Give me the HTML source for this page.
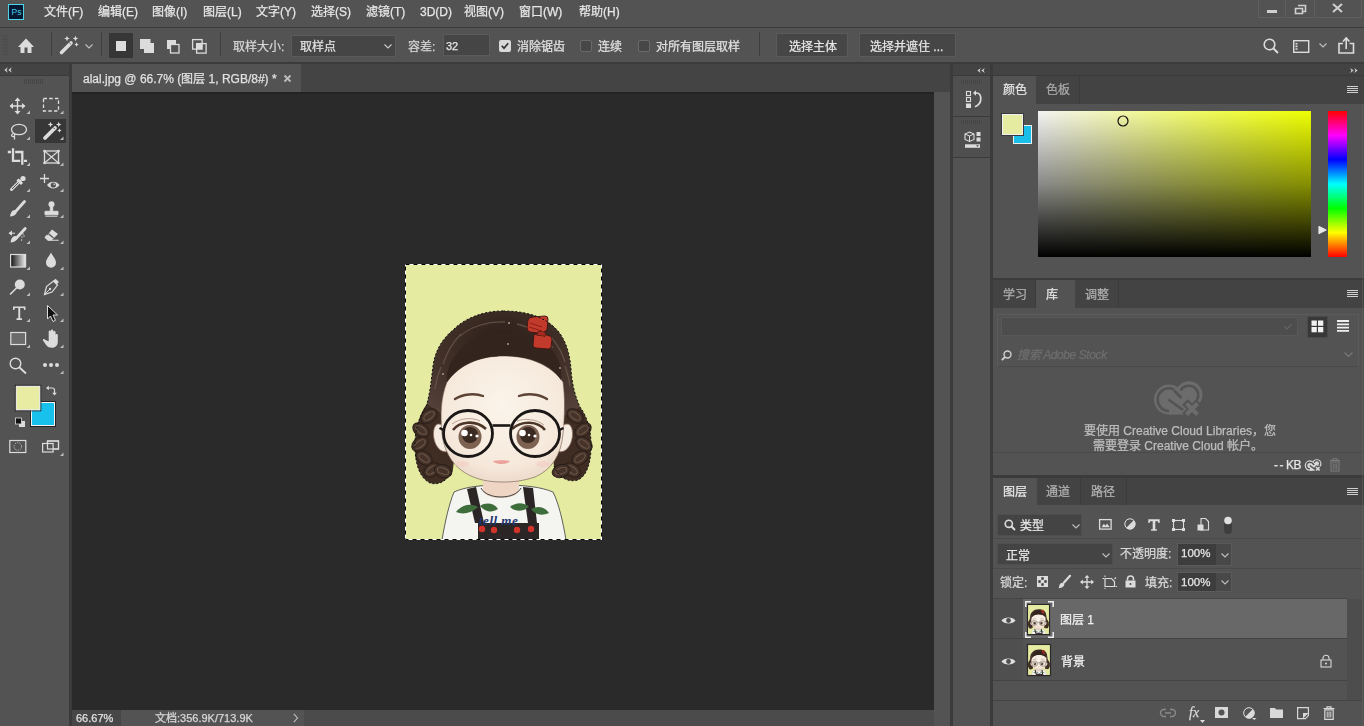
<!DOCTYPE html>
<html lang="zh-CN">
<head>
<meta charset="utf-8">
<style>
*{margin:0;padding:0;box-sizing:border-box}
html,body{width:1364px;height:726px;overflow:hidden;background:#535353;font-family:"Liberation Sans",sans-serif;color:#dcdcdc;font-size:12px}
.a{position:absolute}
.t{position:absolute;white-space:nowrap;line-height:1;will-change:transform;-webkit-text-stroke:0.25px currentColor}
svg{position:absolute;overflow:visible}
</style>
</head>
<body>
<!-- MENU BAR -->
<div class="a" style="left:0;top:0;width:1364px;height:27px;background:#535353"></div>
<div class="a" style="left:0;top:27px;width:1364px;height:1px;background:#3b3b3b"></div>
<svg style="left:8px;top:4px" width="16" height="16"><rect x="0.5" y="0.5" width="15" height="15" fill="#061a33" stroke="#4fd3e6" stroke-width="1"/><text x="3.5" y="11" font-family="Liberation Sans" font-size="8.5" fill="#48c8ea">Ps</text></svg>
<div class="t" style="left:44px;top:6px;font-size:12px;color:#e6e6e6">文件(F)</div>
<div class="t" style="left:98px;top:6px;font-size:12px;color:#e6e6e6">编辑(E)</div>
<div class="t" style="left:152px;top:6px;font-size:12px;color:#e6e6e6">图像(I)</div>
<div class="t" style="left:203px;top:6px;font-size:12px;color:#e6e6e6">图层(L)</div>
<div class="t" style="left:256px;top:6px;font-size:12px;color:#e6e6e6">文字(Y)</div>
<div class="t" style="left:311px;top:6px;font-size:12px;color:#e6e6e6">选择(S)</div>
<div class="t" style="left:366px;top:6px;font-size:12px;color:#e6e6e6">滤镜(T)</div>
<div class="t" style="left:420px;top:6px;font-size:12px;color:#e6e6e6">3D(D)</div>
<div class="t" style="left:464px;top:6px;font-size:12px;color:#e6e6e6">视图(V)</div>
<div class="t" style="left:519px;top:6px;font-size:12px;color:#e6e6e6">窗口(W)</div>
<div class="t" style="left:579px;top:6px;font-size:12px;color:#e6e6e6">帮助(H)</div>
<div class="a" style="left:1258px;top:0;width:104px;height:18px;border:1px solid #5f5f5f;border-top:none"></div>
<div class="a" style="left:1285px;top:0;width:1px;height:17px;background:#5f5f5f"></div>
<div class="a" style="left:1314px;top:0;width:1px;height:17px;background:#5f5f5f"></div>
<div class="a" style="left:1267px;top:10px;width:10px;height:3px;background:#cfcfcf"></div>
<svg style="left:1294px;top:4px" width="13" height="11"><path d="M4 1.5h7.5v6h-3M1.5 4.5h7v5h-7z" fill="none" stroke="#cfcfcf" stroke-width="1.6"/></svg>
<svg style="left:1332px;top:3px" width="11" height="10"><path d="M1 1L10 9M10 1L1 9" stroke="#cfcfcf" stroke-width="2"/></svg>


<!-- OPTIONS BAR -->
<div class="a" style="left:0;top:28px;width:1364px;height:35px;background:#535353"></div>
<div class="a" style="left:0;top:62px;width:1364px;height:2px;background:#3b3b3b"></div>
<svg style="left:2px;top:35px" width="6" height="21"><path d="M0 1h6M0 4h6M0 7h6M0 10h6M0 13h6M0 16h6M0 19h6" stroke="#4a4a4a" stroke-width="1"/></svg>
<svg style="left:17px;top:38px" width="18" height="16"><path d="M9 0.5L17 9H14.5V15H10.5V9.5H7.5V15H3.5V9H1Z" fill="#dcdcdc"/></svg>
<div class="a" style="left:51px;top:32px;width:1px;height:24px;background:#3e3e3e"></div>
<svg style="left:58px;top:35px" width="22" height="20"><path d="M3.5 17.5L13 8" stroke="#dcdcdc" stroke-width="3.6" stroke-linecap="round"/><path d="M9 0.7000000000000002L9.84 2.66L11.8 3.5L9.84 4.34L9 6.3L8.16 4.34L6.2 3.5L8.16 2.66z" fill="#dcdcdc"/><path d="M17.5 0.7000000000000002L18.34 2.66L20.3 3.5L18.34 4.34L17.5 6.3L16.66 4.34L14.7 3.5L16.66 2.66z" fill="#dcdcdc"/><path d="M18.5 7.3L19.16 8.84L20.7 9.5L19.16 10.16L18.5 11.7L17.84 10.16L16.3 9.5L17.84 8.84z" fill="#dcdcdc"/><path d="M11.2 7.5l1.6 1.6" stroke="#535353" stroke-width="0.9"/></svg>
<svg style="left:85px;top:44px" width="8" height="5"><path d="M0.5 0.5L4 4L7.5 0.5" fill="none" stroke="#bdbdbd" stroke-width="1.2"/></svg>
<div class="a" style="left:101px;top:32px;width:1px;height:24px;background:#3e3e3e"></div>
<div class="a" style="left:109px;top:33px;width:24px;height:25px;background:#363636;border-radius:1px"></div>
<div class="a" style="left:116px;top:41px;width:10px;height:10px;background:#dcdcdc"></div>
<svg style="left:140px;top:39px" width="15" height="15"><rect x="0" y="0" width="10.5" height="10" fill="#dcdcdc"/><rect x="4" y="4" width="10" height="10" fill="#dcdcdc"/></svg>
<svg style="left:167px;top:40px" width="13" height="14"><rect x="0" y="0" width="9" height="9" fill="#dcdcdc"/><rect x="3.5" y="4.5" width="8.5" height="8.5" fill="#535353" stroke="#dcdcdc" stroke-width="1.3"/></svg>
<svg style="left:192px;top:39px" width="15" height="15"><rect x="0.6" y="0.6" width="9.5" height="9.5" fill="none" stroke="#dcdcdc" stroke-width="1.3"/><rect x="4.6" y="4.6" width="9.5" height="9.5" fill="none" stroke="#dcdcdc" stroke-width="1.3"/><rect x="4.6" y="4.6" width="5.5" height="5.5" fill="#dcdcdc"/></svg>
<div class="a" style="left:220px;top:32px;width:1px;height:24px;background:#3e3e3e"></div>
<div class="t" style="left:233px;top:41px;color:#d6d6d6">取样大小:</div>
<div class="a" style="left:291px;top:35px;width:105px;height:22px;background:#454545;border:1px solid #5a5a5a"></div>
<div class="t" style="left:300px;top:41px;color:#e0e0e0">取样点</div>
<svg style="left:384px;top:44px" width="8" height="5"><path d="M0.5 0.5L4 4L7.5 0.5" fill="none" stroke="#c8c8c8" stroke-width="1.2"/></svg>
<div class="t" style="left:408px;top:41px;color:#d6d6d6">容差:</div>
<div class="a" style="left:443px;top:34px;width:47px;height:22px;background:#454545;border:1px solid #5a5a5a"></div>
<div class="t" style="left:446px;top:41px;font-size:11px;color:#e6e6e6">32</div>
<div class="a" style="left:499px;top:40px;width:12px;height:12px;background:#d8d8d8;border-radius:2px"></div>
<svg style="left:501px;top:42px" width="8" height="8"><path d="M0.8 3.8L3 6.3L7.2 1.2" fill="none" stroke="#2e2e2e" stroke-width="1.7"/></svg>
<div class="t" style="left:517px;top:41px;color:#e0e0e0">消除锯齿</div>
<div class="a" style="left:580px;top:40px;width:12px;height:12px;background:#474747;border:1px solid #6a6a6a;border-radius:2px"></div>
<div class="t" style="left:598px;top:41px;color:#e0e0e0">连续</div>
<div class="a" style="left:638px;top:40px;width:12px;height:12px;background:#474747;border:1px solid #6a6a6a;border-radius:2px"></div>
<div class="t" style="left:656px;top:41px;color:#e0e0e0">对所有图层取样</div>
<div class="a" style="left:759px;top:32px;width:1px;height:24px;background:#3e3e3e"></div>
<div class="a" style="left:776px;top:33px;width:72px;height:24px;background:#464646;border:1px solid #5a5a5a"></div>
<div class="t" style="left:789px;top:41px;color:#e6e6e6">选择主体</div>
<div class="a" style="left:859px;top:33px;width:97px;height:24px;background:#464646;border:1px solid #5a5a5a"></div>
<div class="t" style="left:870px;top:41px;color:#e6e6e6">选择并遮住 ...</div>
<svg style="left:1263px;top:38px" width="17" height="17"><circle cx="6.5" cy="6.5" r="5.3" fill="none" stroke="#dcdcdc" stroke-width="1.6"/><path d="M10.5 10.5L15 15" stroke="#dcdcdc" stroke-width="2"/></svg>
<svg style="left:1293px;top:40px" width="17" height="14"><rect x="0.7" y="0.7" width="15" height="11.6" fill="none" stroke="#dcdcdc" stroke-width="1.4"/><path d="M3.5 3v1.6M3.5 5.6v1.6M3.5 8.2v1.6" stroke="#dcdcdc" stroke-width="2"/></svg>
<svg style="left:1319px;top:43px" width="8" height="5"><path d="M0.5 0.5L4 4L7.5 0.5" fill="none" stroke="#bdbdbd" stroke-width="1.2"/></svg>
<svg style="left:1338px;top:37px" width="17" height="17"><path d="M5 6.5H1V16H15.5V6.5H11.5" fill="none" stroke="#dcdcdc" stroke-width="1.6"/><path d="M8.2 12V2" stroke="#dcdcdc" stroke-width="1.6"/><path d="M5 4.5L8.2 1L11.4 4.5" fill="none" stroke="#dcdcdc" stroke-width="1.6"/></svg>


<!-- LEFT TOOLS PANEL -->
<div class="a" style="left:0;top:64px;width:69px;height:12px;background:#434343"></div>
<div class="a" style="left:0;top:76px;width:69px;height:650px;background:#535353"></div>
<div class="a" style="left:69px;top:64px;width:3px;height:662px;background:#3b3b3b"></div>
<svg style="left:4px;top:67px" width="8" height="6"><path d="M3.8 0.3L0.3 3L3.8 5.7L2.6 3z M7.8 0.3L4.3 3L7.8 5.7L6.6 3z" fill="#d0d0d0"/></svg>
<svg style="left:24px;top:79px" width="20" height="5"><path d="M0.5 0v5M2.5 0v5M4.5 0v5M6.5 0v5M8.5 0v5M10.5 0v5M12.5 0v5M14.5 0v5M16.5 0v5M18.5 0v5" stroke="#464646" stroke-width="1"/></svg>
<div class="a" style="left:35px;top:119px;width:31px;height:24px;background:#373737"></div>
<svg style="left:0;top:0" width="70" height="460">
<!-- move -->
<path d="M17.5 99v14M10.5 106h14" stroke="#dcdcdc" stroke-width="1.4"/>
<path d="M17.5 97.5l-3 3.5h6z M17.5 114.5l-3-3.5h6z M9.5 106l3.5-3v6z M25.5 106l-3.5-3v6z" fill="#dcdcdc"/>
<path d="M30 114h-3.5l3.5-3.5z" fill="#bdbdbd"/>
<!-- marquee -->
<rect x="43.5" y="98.5" width="15" height="12.5" fill="none" stroke="#dcdcdc" stroke-width="1.3" stroke-dasharray="3.5 2.2"/>
<path d="M63.5 114h-3.5l3.5-3.5z" fill="#bdbdbd"/>
<!-- lasso -->
<ellipse cx="19" cy="129.5" rx="7.5" ry="5.2" fill="none" stroke="#dcdcdc" stroke-width="1.3"/>
<path d="M13 133.5c-2 1.5-2 3 1 3.2M14.5 134v5.5" fill="none" stroke="#dcdcdc" stroke-width="1.3"/>
<path d="M30 140h-3.5l3.5-3.5z" fill="#bdbdbd"/>
<!-- wand -->
<path d="M45 138L55 128" stroke="#dcdcdc" stroke-width="3.8" stroke-linecap="round"/>
<path d="M50.5 121.7L51.34 123.66L53.3 124.5L51.34 125.34L50.5 127.3L49.66 125.34L47.7 124.5L49.66 123.66z" fill="#dcdcdc"/><path d="M58.7 121.7L59.540000000000006 123.66L61.5 124.5L59.540000000000006 125.34L58.7 127.3L57.86 125.34L55.900000000000006 124.5L57.86 123.66z" fill="#dcdcdc"/><path d="M59.4 128.3L60.059999999999995 129.84L61.6 130.5L60.059999999999995 131.16L59.4 132.7L58.74 131.16L57.199999999999996 130.5L58.74 129.84z" fill="#dcdcdc"/><path d="M53.2 127.5l1.5 1.5" stroke="#373737" stroke-width="0.9"/>
<path d="M63.5 140h-3.5l3.5-3.5z" fill="#bdbdbd"/>
<!-- crop -->
<path d="M7.8 152h3.2M13 148.2V160.8H20.2M15.2 152H22.3V164.8M24 160.8h3" fill="none" stroke="#dcdcdc" stroke-width="2.3"/>
<path d="M30 166h-3.5l3.5-3.5z" fill="#bdbdbd"/>
<!-- frame -->
<rect x="44.5" y="151" width="14" height="12" fill="none" stroke="#dcdcdc" stroke-width="1.3"/>
<path d="M44.5 151L58.5 163M58.5 151L44.5 163" stroke="#dcdcdc" stroke-width="1.1"/>
<circle cx="44.5" cy="151" r="1.3" fill="#dcdcdc"/><circle cx="58.5" cy="151" r="1.3" fill="#dcdcdc"/><circle cx="44.5" cy="163" r="1.3" fill="#dcdcdc"/><circle cx="58.5" cy="163" r="1.3" fill="#dcdcdc"/>
<path d="M63.5 166h-3.5l3.5-3.5z" fill="#bdbdbd"/>
<!-- eyedropper -->
<path d="M11.5 189.5L20 181" stroke="#dcdcdc" stroke-width="3" stroke-linecap="round"/>
<path d="M12 189l7.5-7.5" stroke="#535353" stroke-width="1"/>
<path d="M17.5 179.5l4.5 4.5" stroke="#dcdcdc" stroke-width="3"/>
<circle cx="23" cy="178.5" r="2.6" fill="#dcdcdc"/>
<path d="M30 192h-3.5l3.5-3.5z" fill="#bdbdbd"/>
<!-- +eye -->
<path d="M44.5 174v9M40 178.5h9" stroke="#dcdcdc" stroke-width="1.3"/>
<path d="M47 185c3-4.5 9.5-4.5 12.5 0c-3 4.5-9.5 4.5-12.5 0z" fill="#dcdcdc"/>
<circle cx="53.3" cy="185" r="2.6" fill="#535353"/><circle cx="54.2" cy="184.2" r="0.8" fill="#dcdcdc"/>
<path d="M63.5 192h-3.5l3.5-3.5z" fill="#bdbdbd"/>
<!-- brush -->
<path d="M16.5 210.5L24.5 201.5" stroke="#dcdcdc" stroke-width="2.8" stroke-linecap="round"/>
<path d="M10 216.5c0.5-3 1.5-6 4.5-6.5c2 0 3 1.5 2 3.2c-1.5 2.3-4 3-6.5 3.3z" fill="#dcdcdc"/>
<path d="M30 218h-3.5l3.5-3.5z" fill="#bdbdbd"/>
<!-- stamp -->
<circle cx="51.5" cy="204.2" r="3" fill="#dcdcdc"/>
<path d="M50.3 206v5.5h2.4V206z M45 211.3h13v3.5H45z M45.5 216.3h12" fill="#dcdcdc" stroke="#dcdcdc" stroke-width="0.9"/>
<path d="M63.5 218h-3.5l3.5-3.5z" fill="#bdbdbd"/>
<!-- history brush -->
<path d="M16 238.5L25.2 228.5" stroke="#dcdcdc" stroke-width="2.8" stroke-linecap="round"/>
<path d="M10.5 242.5c0.5-3 1.5-6 4.5-6.5c2 0 3 1.5 2 3.2c-1.5 2.3-4 3-6.5 3.3z" fill="#dcdcdc"/>
<path d="M9 233.2h6" stroke="#dcdcdc" stroke-width="1"/><path d="M8.5 233.2l3.5-2.6v5.2z" fill="#dcdcdc"/>
<circle cx="23" cy="234" r="0.7" fill="#dcdcdc"/><circle cx="22" cy="237" r="0.7" fill="#dcdcdc"/><circle cx="24" cy="236" r="0.7" fill="#dcdcdc"/><circle cx="21.5" cy="240" r="0.7" fill="#dcdcdc"/>
<path d="M30 244h-3.5l3.5-3.5z" fill="#bdbdbd"/>
<!-- eraser -->
<path d="M52 229.5l6 4.5l-6.5 6.5h-3.5l-3-2.5z" fill="#dcdcdc"/>
<path d="M48.5 233.8l5 4.2" stroke="#535353" stroke-width="1.3"/>
<path d="M47 235l-1.8 2.2 3 3h10.5" fill="none" stroke="#dcdcdc" stroke-width="1.1"/>
<path d="M63.5 244h-3.5l3.5-3.5z" fill="#bdbdbd"/>
<!-- gradient -->
<defs><linearGradient id="gg" x1="0" x2="1"><stop offset="0" stop-color="#111"/><stop offset="1" stop-color="#eee"/></linearGradient></defs>
<rect x="10.6" y="254.5" width="15" height="12.5" fill="url(#gg)" stroke="#dcdcdc" stroke-width="1.2"/>
<path d="M30 270h-3.5l3.5-3.5z" fill="#bdbdbd"/>
<!-- drop -->
<path d="M51 252.5c-1.5 3.5-5 6.5-5 10.2a5 5 0 0 0 10 0c0-3.7-3.5-6.7-5-10.2z" fill="#dcdcdc"/>
<path d="M63.5 270h-3.5l3.5-3.5z" fill="#bdbdbd"/>
<!-- dodge -->
<circle cx="19.8" cy="284.5" r="5" fill="#dcdcdc"/>
<path d="M16.5 288L10.5 294" stroke="#dcdcdc" stroke-width="1.6" stroke-linecap="round"/>
<path d="M30 296h-3.5l3.5-3.5z" fill="#bdbdbd"/>
<!-- pen -->
<path d="M44.5 294.5l2-8l7-5.5l4 4l-5.5 7z" fill="none" stroke="#dcdcdc" stroke-width="1.2"/>
<path d="M53.2 281l2.3-2.3l3.4 3.4l-2.3 2.3z" fill="#dcdcdc"/>
<path d="M44.8 294.2l4.8-4.8" stroke="#dcdcdc" stroke-width="1"/><circle cx="50" cy="289" r="1.2" fill="#dcdcdc"/>
<path d="M63.5 296h-3.5l3.5-3.5z" fill="#bdbdbd"/>
<!-- type -->
<path d="M13 306.5h12.5v3.5h-1.2l-0.8-2h-3.3v10.3h1.8v1.6h-5.5v-1.6h1.8v-10.3h-3.3l-0.8 2H13z" fill="#dcdcdc"/>
<path d="M30 322h-3.5l3.5-3.5z" fill="#bdbdbd"/>
<!-- path select arrow -->
<path d="M47.5 305.5v13.5l3-3l2.5 5.5l2.5-1.2l-2.5-5.3h4.5z" fill="#111" stroke="#dcdcdc" stroke-width="1"/>
<path d="M63.5 322h-3.5l3.5-3.5z" fill="#bdbdbd"/>
<!-- rectangle -->
<rect x="10.8" y="332.5" width="14.8" height="12" fill="#6b6b6b" stroke="#dcdcdc" stroke-width="1.2"/>
<path d="M30 348h-3.5l3.5-3.5z" fill="#bdbdbd"/>
<!-- hand -->
<path d="M45.5 340c-1.5-1.5-3-1-2.5 0.5l3.5 5c1.3 1.8 3 2.2 5.5 2.2c3.5 0 5.8-2.5 5.8-6v-6.5c0-1.5-2.2-1.5-2.2 0v4v-7c0-1.6-2.3-1.6-2.3 0v6.5v-8c0-1.6-2.3-1.6-2.3 0v8v-7c0-1.6-2.3-1.6-2.3 0v9.5z" fill="#dcdcdc"/>
<path d="M63.5 348h-3.5l3.5-3.5z" fill="#bdbdbd"/>
<!-- zoom -->
<circle cx="15.5" cy="363.5" r="5.3" fill="none" stroke="#dcdcdc" stroke-width="1.4"/>
<path d="M19.5 367.5L25.5 373" stroke="#dcdcdc" stroke-width="1.8" stroke-linecap="round"/>
<!-- more -->
<circle cx="45" cy="365" r="2" fill="#dcdcdc"/><circle cx="51" cy="365" r="2" fill="#dcdcdc"/><circle cx="57" cy="365" r="2" fill="#dcdcdc"/>
<path d="M63.5 374h-3.5l3.5-3.5z" fill="#bdbdbd"/>
<!-- swatches -->
<rect x="30.5" y="401.5" width="25" height="25" fill="none" stroke="#222" stroke-width="1"/><rect x="31.5" y="402.5" width="23" height="23" fill="#18c0ec" stroke="#f4f4f4" stroke-width="1"/>
<rect x="15.3" y="385.3" width="25.5" height="25.5" fill="none" stroke="#222" stroke-width="1"/><rect x="16.3" y="386.3" width="23.5" height="23.5" fill="#e7eca2" stroke="#f4f4f4" stroke-width="1"/>
<path d="M48 388h4.5a2 2 0 0 1 2 2v3.5" fill="none" stroke="#dcdcdc" stroke-width="1.2"/>
<path d="M46 388l2.8-2.3v4.6z M54.5 395.5l-2.3-2.8h4.6z" fill="#dcdcdc"/>
<rect x="19" y="421" width="6" height="6" fill="#dcdcdc"/>
<rect x="15.5" y="418" width="6" height="6" fill="#111" stroke="#dcdcdc" stroke-width="0.8"/>
<!-- quick mask -->
<rect x="9.8" y="440.5" width="16" height="12" fill="none" stroke="#dcdcdc" stroke-width="1.2"/>
<circle cx="17.8" cy="446.5" r="3.8" fill="none" stroke="#dcdcdc" stroke-width="1" stroke-dasharray="1 1.4"/>
<!-- screen mode -->
<rect x="47.5" y="441" width="11" height="8" fill="#535353" stroke="#dcdcdc" stroke-width="1.2"/>
<rect x="42.6" y="443.5" width="10.5" height="8.5" fill="#535353" stroke="#dcdcdc" stroke-width="1.2"/>
<rect x="47.5" y="441" width="11" height="8" fill="none" stroke="#dcdcdc" stroke-width="1.2"/>
<path d="M63.5 456h-3.5l3.5-3.5z" fill="#bdbdbd"/>
</svg>


<!-- DOC AREA -->
<div class="a" style="left:72px;top:64px;width:878px;height:28px;background:#444444"></div>
<div class="a" style="left:72px;top:64px;width:229px;height:28px;background:#535353"></div>
<div class="a" style="left:72px;top:92px;width:862px;height:618px;background:#2a2a2a;border-top:2px solid #232323"></div>
<div class="a" style="left:934px;top:92px;width:16px;height:618px;background:#535353"></div>
<div class="a" style="left:72px;top:710px;width:878px;height:16px;background:#535353"></div>
<div class="a" style="left:950px;top:64px;width:3px;height:662px;background:#3b3b3b"></div>
<div class="t" style="left:83px;top:73px;font-size:12px;color:#e0e0e0">alal.jpg @ 66.7% (图层 1, RGB/8#) *</div>
<svg style="left:284px;top:75px" width="7" height="7"><path d="M0.5 0.5L6.5 6.5M6.5 0.5L0.5 6.5" stroke="#bdbdbd" stroke-width="1.8"/></svg>
<!-- canvas image -->
<svg style="left:405px;top:264px" width="197" height="276" viewBox="0 0 197 276">
<defs>
<radialGradient id="hairg" cx="0.5" cy="0.3" r="0.7"><stop offset="0" stop-color="#2a1e18"/><stop offset="0.55" stop-color="#3f2f27"/><stop offset="1" stop-color="#54413a"/></radialGradient>
<radialGradient id="faceg" cx="0.5" cy="0.4" r="0.6"><stop offset="0" stop-color="#fbf4ea"/><stop offset="0.8" stop-color="#f6e9dc"/><stop offset="1" stop-color="#eedccd"/></radialGradient>
</defs>
<g id="girl"><rect width="197" height="276" fill="#e6eba2"/>
<!-- shirt -->
<path d="M49 228C60 223 75 221 97 221C120 221 136 223 148 228C154 240 158 258 161 276H37C40 258 44 240 49 228z" fill="#f4f4f1" stroke="#3a3a3a" stroke-width="0.8"/>
<path d="M78 212h36v16c-6 8-30 8-36 0z" fill="#efd5c4"/>
<path d="M76 224c6 12 34 12 40 0" fill="none" stroke="#3a3a3a" stroke-width="1"/>
<!-- straps & bib -->
<path d="M62 225l9-2l8 36h-9z" fill="#2b2525"/>
<path d="M118 223l10 1l4 35h-9z" fill="#2b2525"/>
<path d="M73 259h61v17H73z" fill="#2b2525"/>
<circle cx="77" cy="265" r="3.2" fill="#d2342c"/><circle cx="89" cy="266" r="3.2" fill="#d2342c"/><circle cx="112" cy="266" r="3.2" fill="#d2342c"/><circle cx="126" cy="265" r="3.2" fill="#d2342c"/>
<!-- leaves -->
<path d="M51 248c6-8 16-9 22-5c-6 6-15 8-22 5z" fill="#3e6d3c"/>
<path d="M75 242c6-4 14-3 18 3c-6 4-13 3-18-3z" fill="#3e6d3c"/>
<path d="M105 243c6-5 14-5 19 0c-6 5-14 5-19 0z" fill="#3e6d3c"/>
<path d="M126 245c7-4 14-2 18 4c-7 3-14 2-18-4z" fill="#3e6d3c"/>
<text x="74" y="261" font-family="Liberation Serif" font-style="italic" font-size="13" fill="#1f3572" font-weight="bold" letter-spacing="0.5">tell me</text>
<!-- hair back + braids -->
<path d="M98 47C120 47 140 52 153 67C162 78 165 92 166 105C167 120 170 132 175 143L152 165L45 165L21 143C25 130 26 118 28 102C30 88 36 76 48 66C60 54 78 47 98 47z" fill="url(#hairg)"/>
<path d="M22 140C14 150 9 168 10 186C11 202 15 214 25 219C34 222 44 216 48 205C50 192 49 172 45 155z" fill="#3f2d24"/>
<path d="M175 143C182 152 187 168 186 186C185 202 181 212 173 216C163 219 153 213 149 202C147 190 148 170 152 156z" fill="#3f2d24"/>
<ellipse cx="24" cy="152" rx="9" ry="6.3" transform="rotate(-35 24 152)" fill="#45332a" stroke="#2a1d17" stroke-width="1"/>
<ellipse cx="24" cy="152" rx="6" ry="3" transform="rotate(-35 24 152)" fill="none" stroke="#6d5647" stroke-width="1.1"/>
<ellipse cx="16" cy="166" rx="9" ry="6.3" transform="rotate(35 16 166)" fill="#45332a" stroke="#2a1d17" stroke-width="1"/>
<ellipse cx="16" cy="166" rx="6" ry="3" transform="rotate(35 16 166)" fill="none" stroke="#6d5647" stroke-width="1.1"/>
<ellipse cx="15" cy="180" rx="9" ry="6.3" transform="rotate(-35 15 180)" fill="#45332a" stroke="#2a1d17" stroke-width="1"/>
<ellipse cx="15" cy="180" rx="6" ry="3" transform="rotate(-35 15 180)" fill="none" stroke="#6d5647" stroke-width="1.1"/>
<ellipse cx="19" cy="194" rx="9" ry="6.3" transform="rotate(35 19 194)" fill="#45332a" stroke="#2a1d17" stroke-width="1"/>
<ellipse cx="19" cy="194" rx="6" ry="3" transform="rotate(35 19 194)" fill="none" stroke="#6d5647" stroke-width="1.1"/>
<ellipse cx="27" cy="206" rx="9" ry="6.3" transform="rotate(-35 27 206)" fill="#45332a" stroke="#2a1d17" stroke-width="1"/>
<ellipse cx="27" cy="206" rx="6" ry="3" transform="rotate(-35 27 206)" fill="none" stroke="#6d5647" stroke-width="1.1"/>
<ellipse cx="38" cy="207" rx="9" ry="6.3" transform="rotate(20 38 207)" fill="#45332a" stroke="#2a1d17" stroke-width="1"/>
<ellipse cx="38" cy="207" rx="6" ry="3" transform="rotate(20 38 207)" fill="none" stroke="#6d5647" stroke-width="1.1"/>
<ellipse cx="170" cy="152" rx="9" ry="6.3" transform="rotate(35 170 152)" fill="#45332a" stroke="#2a1d17" stroke-width="1"/>
<ellipse cx="170" cy="152" rx="6" ry="3" transform="rotate(35 170 152)" fill="none" stroke="#6d5647" stroke-width="1.1"/>
<ellipse cx="178" cy="166" rx="9" ry="6.3" transform="rotate(-35 178 166)" fill="#45332a" stroke="#2a1d17" stroke-width="1"/>
<ellipse cx="178" cy="166" rx="6" ry="3" transform="rotate(-35 178 166)" fill="none" stroke="#6d5647" stroke-width="1.1"/>
<ellipse cx="179" cy="180" rx="9" ry="6.3" transform="rotate(35 179 180)" fill="#45332a" stroke="#2a1d17" stroke-width="1"/>
<ellipse cx="179" cy="180" rx="6" ry="3" transform="rotate(35 179 180)" fill="none" stroke="#6d5647" stroke-width="1.1"/>
<ellipse cx="175" cy="194" rx="9" ry="6.3" transform="rotate(-35 175 194)" fill="#45332a" stroke="#2a1d17" stroke-width="1"/>
<ellipse cx="175" cy="194" rx="6" ry="3" transform="rotate(-35 175 194)" fill="none" stroke="#6d5647" stroke-width="1.1"/>
<ellipse cx="167" cy="206" rx="9" ry="6.3" transform="rotate(35 167 206)" fill="#45332a" stroke="#2a1d17" stroke-width="1"/>
<ellipse cx="167" cy="206" rx="6" ry="3" transform="rotate(35 167 206)" fill="none" stroke="#6d5647" stroke-width="1.1"/>
<ellipse cx="156" cy="207" rx="9" ry="6.3" transform="rotate(-20 156 207)" fill="#45332a" stroke="#2a1d17" stroke-width="1"/>
<ellipse cx="156" cy="207" rx="6" ry="3" transform="rotate(-20 156 207)" fill="none" stroke="#6d5647" stroke-width="1.1"/>
<!-- face -->
<path d="M33 160c-7 2-6 22 4 27c5 2 9 0 10-4l-2-22z" fill="#f6ebe0" stroke="#8a7060" stroke-width="0.8"/>
<path d="M163 160c7 2 6 22-4 27c-5 2-9 0-10-4l2-22z" fill="#f6ebe0" stroke="#8a7060" stroke-width="0.8"/>
<path d="M42 118C55 100 75 92 99 92C123 92 145 100 158 118C160 132 160 150 158 170C156 192 146 206 130 213C118 217 108 218 98 218C88 218 77 217 66 212C51 205 40 192 37 170C35 150 36 133 42 118z" fill="url(#faceg)" stroke="#6b5548" stroke-width="0.6"/>
<!-- hair front fringe -->
<path d="M42 118C40 105 50 85 70 75C90 66 115 66 135 76C150 84 158 100 156 116C146 100 125 92 99 92C75 92 55 100 42 118z" fill="#33251e"/>
<path d="M55 72c10-9 28-15 45-14M112 60c14 3 28 12 36 24M38 100c4-12 10-22 18-30M160 98c-3-10-8-18-14-25M30 125c1-8 3-15 6-22M165 122c-1-8-3-14-5-20" fill="none" stroke="#6a564a" stroke-width="1.3" opacity="0.8"/>
<circle cx="104" cy="59" r="1" fill="#b8a090"/><circle cx="103" cy="80" r="0.9" fill="#b8a090"/><circle cx="155" cy="104" r="0.9" fill="#b8a090"/><circle cx="38" cy="110" r="0.9" fill="#b8a090"/>
<!-- bow -->
<path d="M123 56Q124 53 128 53L140 52Q143 52 143 55L142 66L137 69.5L125 68Q122 67 122 64z" fill="#c23a2b" stroke="#3a1510" stroke-width="0.9"/>
<path d="M129 70.5L137 69.5L145 72Q147 73 147 76L146 83Q146 85 143 85L131 84Q128 84 128 81z" fill="#c23a2b" stroke="#3a1510" stroke-width="0.9"/>
<path d="M125 59l12 4M124 63l13 4" stroke="#8a2018" stroke-width="1" fill="none"/>
<path d="M133 67.5q4-1 8 1.5l-1 3.5q-4-1.5-8-1z" fill="#a82a1e" stroke="#4a1a12" stroke-width="0.7"/>
<!-- eyebrows -->
<path d="M50 135c8-5 20-6 28-3" fill="none" stroke="#5d4334" stroke-width="2.4" stroke-linecap="round"/>
<path d="M114 132c8-3 20-2 28 3" fill="none" stroke="#5d4334" stroke-width="2.4" stroke-linecap="round"/>
<!-- eyes -->
<ellipse cx="65" cy="173" rx="11.5" ry="12" fill="#7d6252"/><ellipse cx="65" cy="171" rx="8" ry="8" fill="#3a2a22"/>
<ellipse cx="123" cy="173" rx="11.5" ry="12" fill="#7d6252"/><ellipse cx="123" cy="171" rx="8" ry="8" fill="#3a2a22"/>
<circle cx="59.5" cy="169" r="3.3" fill="#fff"/><circle cx="66" cy="171" r="1.3" fill="#fff"/><circle cx="72" cy="172" r="1.6" fill="#fff"/>
<circle cx="117.5" cy="169" r="3.3" fill="#fff"/><circle cx="124" cy="171" r="1.3" fill="#fff"/><circle cx="130" cy="172" r="1.6" fill="#fff"/>
<path d="M48 166c6-8 22-11 33-1M107 165c10-9 26-8 33 1" fill="none" stroke="#4d3528" stroke-width="2.6"/>
<path d="M47 160c8-6 20-7 28-3M112 157c8-3 19-2 27 4" fill="none" stroke="#b9a090" stroke-width="1"/>
<!-- glasses -->
<ellipse cx="63" cy="169.5" rx="24.5" ry="23" fill="none" stroke="#1a1716" stroke-width="2.8"/>
<ellipse cx="130" cy="169.5" rx="24.5" ry="23" fill="none" stroke="#1a1716" stroke-width="2.8"/>
<path d="M87.5 161.5h18" stroke="#1a1716" stroke-width="2.6"/>
<path d="M38.5 166l-4 -2M154.5 166l4-2" stroke="#1a1716" stroke-width="2.4"/>
<!-- mouth & cheeks -->
<path d="M88 197c5-1 12-1 17 0c-2 4-15 4-17 0z" fill="#eaa29a"/>
<ellipse cx="57" cy="200" rx="7" ry="3" fill="#f3d0c4" opacity="0.7"/><ellipse cx="138" cy="200" rx="7" ry="3" fill="#f3d0c4" opacity="0.7"/>
</g>
<!-- marching ants -->
<path d="M98 47C78 47 60 54 48 66C36 76 30 88 28 102C26 118 25 130 21 143C14 152 9 168 10 186C11 202 15 214 25 219C34 222 44 216 48 205M149 202C153 213 163 219 173 216C181 212 185 202 186 186C187 168 182 152 175 143C170 132 167 120 166 105C165 92 162 78 153 67C140 52 120 47 98 47" fill="none" stroke="#111" stroke-width="1" stroke-dasharray="2 2"/>
<rect x="0.5" y="0.5" width="196" height="275" fill="none" stroke="#fff" stroke-width="1"/>
<rect x="0.5" y="0.5" width="196" height="275" fill="none" stroke="#000" stroke-width="1" stroke-dasharray="4 4"/>
</svg>
<!-- status bar -->
<div class="a" style="left:304px;top:710px;width:630px;height:16px;background:#4b4b4b"></div>
<div class="a" style="left:72px;top:710px;width:49px;height:16px;background:#474747"></div>
<div class="t" style="left:76px;top:713px;font-size:11px;color:#e0e0e0">66.67%</div>
<div class="t" style="left:155px;top:713px;font-size:11px;color:#d8d8d8">文档:356.9K/713.9K</div>
<svg style="left:293px;top:713px" width="6" height="10"><path d="M0.8 0.8L4.5 5L0.8 9.2" fill="none" stroke="#c0c0c0" stroke-width="1.1"/></svg>


<!-- ICON STRIP -->
<div class="a" style="left:953px;top:64px;width:37px;height:12px;background:#434343"></div>
<div class="a" style="left:953px;top:76px;width:37px;height:650px;background:#535353"></div>
<div class="a" style="left:990px;top:64px;width:3px;height:662px;background:#3b3b3b"></div>
<svg style="left:977px;top:68px" width="8" height="5"><path d="M3.8 0L0.3 2.5L3.8 5L2.6 2.5z M7.8 0L4.3 2.5L7.8 5L6.6 2.5z" fill="#d0d0d0"/></svg>
<div class="a" style="left:953px;top:76px;width:37px;height:41px;border-bottom:1px solid #3a3a3a;background:#4f4f4f"></div>
<div class="a" style="left:953px;top:117px;width:37px;height:41px;border-bottom:1px solid #3a3a3a;background:#4f4f4f"></div>
<svg style="left:961px;top:80px" width="22" height="5"><path d="M0.5 0v4M2.5 0v4M4.5 0v4M6.5 0v4M8.5 0v4M10.5 0v4M12.5 0v4M14.5 0v4M16.5 0v4M18.5 0v4M20.5 0v4" stroke="#464646" stroke-width="1"/></svg>
<svg style="left:961px;top:120px" width="22" height="5"><path d="M0.5 0v4M2.5 0v4M4.5 0v4M6.5 0v4M8.5 0v4M10.5 0v4M12.5 0v4M14.5 0v4M16.5 0v4M18.5 0v4M20.5 0v4" stroke="#464646" stroke-width="1"/></svg>
<svg style="left:965px;top:90px" width="17" height="19"><rect x="1.5" y="1.5" width="4" height="4" fill="none" stroke="#dcdcdc" stroke-width="1.1"/><rect x="1.5" y="7.5" width="4" height="4" fill="none" stroke="#dcdcdc" stroke-width="1.1"/><rect x="1" y="13.5" width="5" height="4.5" fill="#dcdcdc"/><path d="M9 3h2.5c2.8 0 4.3 2.6 4.3 5.8c0 3.6-2.2 6.5-5.8 8" fill="none" stroke="#dcdcdc" stroke-width="1.7"/><path d="M8 3l3-2.8v5.6z" fill="#dcdcdc"/></svg>
<svg style="left:964px;top:131px" width="18" height="18"><path d="M5.5 1L10 3v5.5L5.5 10.5L1 8.5V3z" fill="none" stroke="#dcdcdc" stroke-width="1.1"/><path d="M1 3l4.5 2l4.5-2M5.5 5v5.5" fill="none" stroke="#dcdcdc" stroke-width="1"/><rect x="12.5" y="1" width="4" height="4" fill="#dcdcdc"/><rect x="12.5" y="6.5" width="4" height="4" fill="#dcdcdc"/><rect x="1" y="13.3" width="15" height="3.5" fill="#dcdcdc"/><path d="M12 14.2h3l-1.5 1.8z" fill="#535353"/></svg>


<!-- RIGHT PANELS -->
<div class="a" style="left:993px;top:64px;width:371px;height:12px;background:#434343"></div>

<svg style="left:1350px;top:68px" width="8" height="5"><path d="M0.2 0L3.7 2.5L0.2 5L1.4 2.5z M4.2 0L7.7 2.5L4.2 5L5.4 2.5z" fill="#d0d0d0"/></svg>
<!-- COLOR PANEL -->
<div class="a" style="left:993px;top:76px;width:371px;height:28px;background:#434343"></div>
<div class="a" style="left:993px;top:76px;width:43px;height:28px;background:#535353"></div>
<div class="a" style="left:1036px;top:76px;width:44px;height:28px;border-right:1px solid #3c3c3c"></div>
<div class="t" style="left:1003px;top:84px;font-size:12px;color:#e6e6e6">颜色</div>
<div class="t" style="left:1046px;top:84px;font-size:12px;color:#a8a8a8">色板</div>
<svg style="left:1347px;top:86px" width="11" height="8"><path d="M0 0.5h11M0 2.5h11M0 4.5h11M0 6.5h11" stroke="#d0d0d0" stroke-width="1"/></svg>
<div class="a" style="left:993px;top:104px;width:369px;height:174px;background:#535353"></div>
<div class="a" style="left:1038px;top:111px;width:273px;height:146px;background:linear-gradient(to bottom,rgba(0,0,0,0) 0%,rgba(0,0,0,0.44) 50%,#000 100%),linear-gradient(to right,#f4f4f4,#eeff00)"></div>
<svg style="left:1117px;top:115px" width="12" height="12"><circle cx="6" cy="6" r="5" fill="none" stroke="#111" stroke-width="1.2"/></svg>
<div class="a" style="left:1328px;top:111px;width:19px;height:146px;background:linear-gradient(to bottom,#ff0000 0%,#ff00ff 16.7%,#0000ff 33.3%,#00ffff 50%,#00ff00 66.7%,#ffff00 83.3%,#ff0000 100%)"></div>
<svg style="left:1318px;top:225px" width="9" height="10"><path d="M1 1.5L8 5L1 8.5z" fill="#e8e8e8" stroke="#e8e8e8" stroke-width="1.2" stroke-linejoin="round"/></svg>
<div class="a" style="left:1013px;top:125px;width:19px;height:19px;background:#19bfe9;border:1px solid #f0f0f0"></div>
<div class="a" style="left:1002px;top:114px;width:21px;height:21px;background:#e6eba2;border:1px solid #f0f0f0;outline:1px solid #3a3a3a"></div>
<div class="a" style="left:993px;top:278px;width:371px;height:2px;background:#3b3b3b"></div>
<!-- LIBRARY PANEL -->
<div class="a" style="left:993px;top:280px;width:371px;height:28px;background:#434343"></div>
<div class="a" style="left:993px;top:280px;width:43px;height:28px;border-right:1px solid #3c3c3c"></div>
<div class="a" style="left:1036px;top:280px;width:39px;height:28px;background:#535353"></div>
<div class="a" style="left:1075px;top:280px;width:44px;height:28px;border-right:1px solid #3c3c3c"></div>
<div class="t" style="left:1003px;top:289px;font-size:12px;color:#b0b0b0">学习</div>
<div class="t" style="left:1046px;top:289px;font-size:12px;color:#e6e6e6">库</div>
<div class="t" style="left:1085px;top:289px;font-size:12px;color:#b0b0b0">调整</div>
<svg style="left:1347px;top:290px" width="11" height="8"><path d="M0 0.5h11M0 2.5h11M0 4.5h11M0 6.5h11" stroke="#d0d0d0" stroke-width="1"/></svg>
<div class="a" style="left:993px;top:308px;width:369px;height:144px;background:#535353"></div>
<div class="a" style="left:1001px;top:317px;width:297px;height:19px;background:#4d4d4d;border:1px solid #585858"></div>
<svg style="left:1284px;top:324px" width="8" height="6"><path d="M0.5 2.5L3 5L7.5 0.5" fill="none" stroke="#666" stroke-width="1.2"/></svg>
<div class="a" style="left:1307px;top:316px;width:21px;height:22px;background:#383838;border:1px solid #4a4a4a"></div>
<svg style="left:1311px;top:320px" width="13" height="13"><rect x="0.5" y="0.5" width="5.3" height="5.3" fill="#f0f0f0"/><rect x="7" y="0.5" width="5.3" height="5.3" fill="#f0f0f0"/><rect x="0.5" y="7" width="5.3" height="5.3" fill="#f0f0f0"/><rect x="7" y="7" width="5.3" height="5.3" fill="#f0f0f0"/></svg>
<svg style="left:1337px;top:320px" width="12" height="12"><path d="M0 1h12M0 4.3h12M0 7.6h12M0 10.9h12" stroke="#f0f0f0" stroke-width="1.8"/></svg>
<svg style="left:1001px;top:350px" width="11" height="11"><circle cx="6.5" cy="4.5" r="3.5" fill="none" stroke="#d0d0d0" stroke-width="1.4"/><path d="M4 7L0.8 10.2" stroke="#d0d0d0" stroke-width="1.8"/></svg>
<div class="t" style="left:1017px;top:349px;font-size:12px;color:#6e6e6e;font-style:italic;letter-spacing:-0.4px">搜索 Adobe Stock</div>
<svg style="left:1344px;top:352px" width="9" height="6"><path d="M0.5 0.5L4.5 4.5L8.5 0.5" fill="none" stroke="#7a7a7a" stroke-width="1.1"/></svg>
<div class="a" style="left:997px;top:314px;width:362px;height:53px;border:1px solid #5b5b5b;border-bottom-color:#4a4a4a"></div>
<svg style="left:1152px;top:378px" width="52" height="40"><g fill="#6c6c6c"><circle cx="17" cy="21.6" r="15"/><circle cx="37" cy="16.8" r="13.5"/><rect x="17" y="20" width="22" height="16.6"/></g><g fill="none" stroke="#535353" stroke-width="2.6"><path d="M17 33a11.4 11.4 0 0 1 0-22.8c2 0 3.5 0.5 5 1.2M28.5 12.5A9.3 9.3 0 1 1 45 22M16.5 21.5L31 32M22 12.5L29.5 20"/></g><path d="M33 24l14 14M47 24L33 38" stroke="#535353" stroke-width="8"/><path d="M34.5 25.5l11 11M45.5 25.5l-11 11" stroke="#6c6c6c" stroke-width="4.2"/></svg>
<div class="t" style="left:1084px;top:425px;font-size:12px;color:#bdbdbd">要使用 Creative Cloud Libraries，您</div>
<div class="t" style="left:1093px;top:440px;font-size:12px;color:#bdbdbd">需要登录 Creative Cloud 帐户。</div>
<div class="a" style="left:993px;top:452px;width:369px;height:23px;background:#535353;border-top:1px solid #4a4a4a"></div>
<div class="t" style="left:1274px;top:459px;font-size:12px;color:#e6e6e6;letter-spacing:1.5px">--</div><div class="t" style="left:1286px;top:459px;font-size:12px;color:#e6e6e6;letter-spacing:-0.4px">KB</div>
<svg style="left:1304px;top:458px" width="18" height="14" viewBox="0 0 52 40"><g fill="#d8d8d8"><circle cx="17" cy="21.6" r="15"/><circle cx="37" cy="16.8" r="13.5"/><rect x="17" y="20" width="22" height="16.6"/></g><g fill="none" stroke="#535353" stroke-width="4"><path d="M17 31a9.4 9.4 0 0 1 0-18.8c2 0 3.5 0.5 5 1.2M29.5 13.5A8 8 0 1 1 43 21M16.5 21.5L31 32M22 12.5L29.5 20"/></g><path d="M33 24l14 14M47 24L33 38" stroke="#535353" stroke-width="11"/><path d="M35 26l10 10M45 26l-10 10" stroke="#d8d8d8" stroke-width="4.5"/></svg>
<svg style="left:1329px;top:458px" width="12" height="14"><path d="M1 2.5h10M4 2.5V0.8h4v1.7M2 4h8v9H2z" fill="none" stroke="#7c7c7c" stroke-width="1.1"/><path d="M4.3 5.5v6M6 5.5v6M7.7 5.5v6" stroke="#7c7c7c" stroke-width="0.9"/></svg>
<div class="a" style="left:993px;top:475px;width:371px;height:3px;background:#3b3b3b"></div>
<!-- LAYERS PANEL -->
<div class="a" style="left:993px;top:478px;width:371px;height:27px;background:#434343"></div>
<div class="a" style="left:993px;top:478px;width:44px;height:27px;background:#535353"></div>
<div class="a" style="left:1037px;top:478px;width:44px;height:27px;border-right:1px solid #3c3c3c"></div>
<div class="a" style="left:1081px;top:478px;width:46px;height:27px;border-right:1px solid #3c3c3c"></div>
<div class="t" style="left:1003px;top:486px;font-size:12px;color:#e6e6e6">图层</div>
<div class="t" style="left:1046px;top:486px;font-size:12px;color:#b0b0b0">通道</div>
<div class="t" style="left:1091px;top:486px;font-size:12px;color:#b0b0b0">路径</div>
<svg style="left:1347px;top:488px" width="11" height="8"><path d="M0 0.5h11M0 2.5h11M0 4.5h11M0 6.5h11" stroke="#d0d0d0" stroke-width="1"/></svg>
<div class="a" style="left:993px;top:505px;width:369px;height:221px;background:#535353"></div>
<div class="a" style="left:997px;top:514px;width:85px;height:22px;background:#444;border:1px solid #4e4e4e"></div>
<svg style="left:1004px;top:519px" width="12" height="12"><circle cx="4.8" cy="4.8" r="3.6" fill="none" stroke="#dcdcdc" stroke-width="1.6"/><path d="M7.5 7.5L11 11" stroke="#dcdcdc" stroke-width="2"/></svg>
<div class="t" style="left:1020px;top:520px;font-size:12px;color:#e6e6e6">类型</div>
<svg style="left:1072px;top:524px" width="8" height="5"><path d="M0.5 0.5L4 4L7.5 0.5" fill="none" stroke="#c0c0c0" stroke-width="1.1"/></svg>
<svg style="left:1099px;top:519px" width="13" height="11"><rect x="0.6" y="0.6" width="11.5" height="9.5" fill="none" stroke="#dcdcdc" stroke-width="1.3"/><path d="M2.5 8.3l2.3-3.5l1.8 2l1.5-2.3l2.6 3.8z" fill="#dcdcdc"/></svg>
<svg style="left:1124px;top:518px" width="12" height="12"><circle cx="6" cy="6" r="5.2" fill="#dcdcdc"/><path d="M9.7 2.3L2.3 9.7A5.2 5.2 0 0 1 9.7 2.3z" fill="#535353"/><circle cx="6" cy="6" r="5.2" fill="none" stroke="#dcdcdc" stroke-width="1"/></svg>
<svg style="left:1148px;top:519px" width="12" height="12"><path d="M0.3 0.3h11.4v3.6h-1.2l-0.7-1.6H7.3v8h1.6v1.4H3.1v-1.4h1.6v-8H2.2L1.5 3.9H0.3z" fill="#dcdcdc"/></svg>
<svg style="left:1172px;top:519px" width="13" height="12"><rect x="1.5" y="1.5" width="10" height="9" fill="none" stroke="#dcdcdc" stroke-width="1.1"/><rect x="0" y="0" width="3" height="3" fill="#dcdcdc"/><rect x="10" y="0" width="3" height="3" fill="#dcdcdc"/><rect x="0" y="9" width="3" height="3" fill="#dcdcdc"/><rect x="10" y="9" width="3" height="3" fill="#dcdcdc"/></svg>
<svg style="left:1197px;top:518px" width="12" height="13"><path d="M4 0.5h4.5l3 3v8.5H4z" fill="none" stroke="#dcdcdc" stroke-width="1.1"/><rect x="0.5" y="6.5" width="6" height="6" fill="#dcdcdc"/></svg>
<svg style="left:1221px;top:515px" width="14" height="20"><rect x="3" y="5" width="8" height="14" rx="4" fill="#3e3e3e"/><circle cx="7" cy="5.5" r="3.8" fill="#e0e0e0"/></svg>
<div class="a" style="left:993px;top:538px;width:369px;height:1px;background:#4a4a4a"></div>
<div class="a" style="left:993px;top:568px;width:369px;height:1px;background:#4a4a4a"></div>
<div class="a" style="left:997px;top:543px;width:116px;height:22px;background:#444;border:1px solid #4e4e4e"></div>
<div class="t" style="left:1006px;top:550px;font-size:12px;color:#e6e6e6">正常</div>
<svg style="left:1102px;top:553px" width="8" height="5"><path d="M0.5 0.5L4 4L7.5 0.5" fill="none" stroke="#c0c0c0" stroke-width="1.1"/></svg>
<div class="t" style="left:1120px;top:548px;font-size:12px;color:#d8d8d8">不透明度:</div>
<div class="a" style="left:1177px;top:543px;width:55px;height:23px;background:#484848;border:1px solid #5a5a5a"></div><div class="a" style="left:1178px;top:544px;width:38px;height:21px;background:#3d3d3d"></div>
<div class="t" style="left:1181px;top:548px;font-size:11.5px;color:#e6e6e6">100%</div>

<svg style="left:1221px;top:553px" width="8" height="5"><path d="M0.5 0.5L4 4L7.5 0.5" fill="none" stroke="#c0c0c0" stroke-width="1.1"/></svg>
<div class="t" style="left:1000px;top:577px;font-size:12px;color:#d8d8d8">锁定:</div>
<svg style="left:1037px;top:576px" width="11" height="11"><rect x="0" y="0" width="11" height="11" fill="#dcdcdc"/><path d="M4.3 1.3h2.4v2.4H4.3zM1.3 4.3h2.4v2.4H1.3zM7.3 4.3h2.4v2.4H7.3zM4.3 7.3h2.4v2.4H4.3z" fill="#3a3a3a"/></svg>
<svg style="left:1058px;top:575px" width="13" height="14"><path d="M12 0.8L6 7.5" stroke="#dcdcdc" stroke-width="2.2" stroke-linecap="round"/><path d="M0.8 13.2c0.3-2.8 1-5.2 3.5-5.5c1.7 0 2.6 1.3 1.7 2.8c-1 1.8-3.2 2.4-5.2 2.7z" fill="#dcdcdc"/></svg>
<svg style="left:1080px;top:575px" width="14" height="14"><path d="M7 1v12M1 7h12" stroke="#dcdcdc" stroke-width="1.3"/><path d="M7 0l-2.5 2.8h5zM7 14l-2.5-2.8h5zM0 7l2.8-2.5v5zM14 7l-2.8-2.5v5z" fill="#dcdcdc"/></svg>
<svg style="left:1102px;top:575px" width="15" height="14"><path d="M3 3.5h6.5l3 3V11.5H3z" fill="none" stroke="#dcdcdc" stroke-width="1.2"/><path d="M3 0.5v1.5M0.5 3.5h1.5M3 13v1M13.5 11.5h1.5M12.5 4l1.5-1.5" stroke="#dcdcdc" stroke-width="1.1"/></svg>
<svg style="left:1125px;top:575px" width="11" height="13"><path d="M2.5 5.5V4a3 3 0 0 1 6 0v1.5" fill="none" stroke="#dcdcdc" stroke-width="1.5"/><rect x="0.5" y="5.5" width="10" height="7" fill="#dcdcdc"/><circle cx="5.5" cy="9" r="1.1" fill="#535353"/></svg>
<div class="t" style="left:1145px;top:577px;font-size:12px;color:#d8d8d8">填充:</div>
<div class="a" style="left:1177px;top:572px;width:55px;height:20px;background:#484848;border:1px solid #5a5a5a"></div><div class="a" style="left:1178px;top:573px;width:38px;height:18px;background:#3d3d3d"></div>
<div class="t" style="left:1181px;top:577px;font-size:11.5px;color:#e6e6e6">100%</div>

<svg style="left:1221px;top:580px" width="8" height="5"><path d="M0.5 0.5L4 4L7.5 0.5" fill="none" stroke="#c0c0c0" stroke-width="1.1"/></svg>
<!-- layer list -->
<div class="a" style="left:993px;top:598px;width:354px;height:1px;background:#454545"></div>
<div class="a" style="left:993px;top:599px;width:30px;height:81px;background:#4f4f4f"></div>
<div class="a" style="left:1023px;top:599px;width:324px;height:39px;background:#686868"></div>
<div class="a" style="left:993px;top:638px;width:354px;height:1px;background:#444"></div>
<div class="a" style="left:993px;top:680px;width:354px;height:1px;background:#444"></div>
<div class="a" style="left:1347px;top:599px;width:15px;height:102px;background:#4d4d4d"></div>
<svg style="left:1001px;top:616px" width="15" height="9"><path d="M0.5 4.5C3 0.5 12 0.5 14.5 4.5C12 8.5 3 8.5 0.5 4.5z" fill="#e0e0e0"/><circle cx="7.5" cy="4.5" r="2.4" fill="#4f4f4f"/></svg>
<svg style="left:1001px;top:657px" width="15" height="9"><path d="M0.5 4.5C3 0.5 12 0.5 14.5 4.5C12 8.5 3 8.5 0.5 4.5z" fill="#e0e0e0"/><circle cx="7.5" cy="4.5" r="2.4" fill="#4f4f4f"/></svg>

<svg style="left:1027px;top:604px" width="23" height="31" viewBox="0 0 197 276" preserveAspectRatio="none"><use href="#girl"/><rect x="4" y="4" width="189" height="268" fill="none" stroke="#2a2a2a" stroke-width="10"/></svg>
<svg style="left:1025px;top:601px" width="29" height="37"><path d="M0.8 6V0.8H6M23 0.8h5.2V6M28.2 31v5.2H23M6 36.2H0.8V31" fill="none" stroke="#f0f0f0" stroke-width="1.5"/></svg>
<svg style="left:1027px;top:644px" width="24" height="32" viewBox="0 0 197 276" preserveAspectRatio="none"><use href="#girl"/><rect x="4" y="4" width="189" height="268" fill="none" stroke="#2a2a2a" stroke-width="10"/></svg>
<div class="t" style="left:1060px;top:614px;font-size:12px;color:#f0f0f0">图层 1</div>
<div class="t" style="left:1061px;top:656px;font-size:12px;color:#f0f0f0">背景</div>
<svg style="left:1320px;top:654px" width="12" height="14"><path d="M3 6V4.3a3 3 0 0 1 6 0V6" fill="none" stroke="#d8d8d8" stroke-width="1.1"/><rect x="1" y="6" width="10" height="7" fill="none" stroke="#d8d8d8" stroke-width="1.1"/><circle cx="6" cy="9.5" r="1" fill="#d8d8d8"/></svg>
<div class="a" style="left:993px;top:700px;width:369px;height:1px;background:#444"></div>
<svg style="left:1160px;top:708px" width="16" height="10"><path d="M6 1.5H4a3.5 3.5 0 0 0 0 7h2M10 1.5h2a3.5 3.5 0 0 1 0 7h-2M5 5h6" fill="none" stroke="#8a8a8a" stroke-width="1.4"/></svg>
<div class="t" style="left:1189px;top:706px;font-size:14px;color:#d8d8d8;font-family:'Liberation Serif';font-style:italic">fx</div>
<svg style="left:1200px;top:720px" width="5" height="3"><path d="M0 0h5L2.5 3z" fill="#e0e0e0"/></svg>
<svg style="left:1215px;top:707px" width="13" height="11"><rect x="0" y="0" width="13" height="11" fill="#d8d8d8"/><circle cx="6.5" cy="5.5" r="3" fill="#535353"/></svg>
<svg style="left:1243px;top:707px" width="13" height="13"><circle cx="6" cy="6" r="5.3" fill="#dcdcdc"/><path d="M9.7 2.3L2.3 9.7A5.2 5.2 0 0 1 9.7 2.3z" fill="#535353"/><circle cx="6" cy="6" r="5.3" fill="none" stroke="#dcdcdc" stroke-width="1"/><path d="M9 11h4.5l-2.2 2z" fill="#e0e0e0"/></svg>
<svg style="left:1270px;top:707px" width="13" height="11"><path d="M0 1h5l1 1.5h7V11H0z" fill="#d8d8d8"/></svg>
<svg style="left:1297px;top:707px" width="12" height="12"><path d="M0.6 0.6h10.8v8l-3 3H0.6z" fill="none" stroke="#d8d8d8" stroke-width="1.2"/><path d="M6 6h5.5L6 11.5z" fill="#d8d8d8"/></svg>
<svg style="left:1323px;top:706px" width="12" height="14"><path d="M0.5 2.5h11M4 2.5V0.8h4v1.7M1.8 3.8h8.4v9.5H1.8z" fill="none" stroke="#d8d8d8" stroke-width="1.2"/><path d="M4.2 5.5v6M6 5.5v6M7.8 5.5v6" stroke="#d8d8d8" stroke-width="1"/></svg>


<div class="a" style="left:1362px;top:104px;width:1px;height:622px;background:#5e5e5e;opacity:0.6"></div>
<div class="a" style="left:0;top:75px;width:69px;height:1px;background:#3a3a3a"></div>
<div class="a" style="left:953px;top:75px;width:411px;height:1px;background:#3a3a3a"></div>
</body>
</html>
